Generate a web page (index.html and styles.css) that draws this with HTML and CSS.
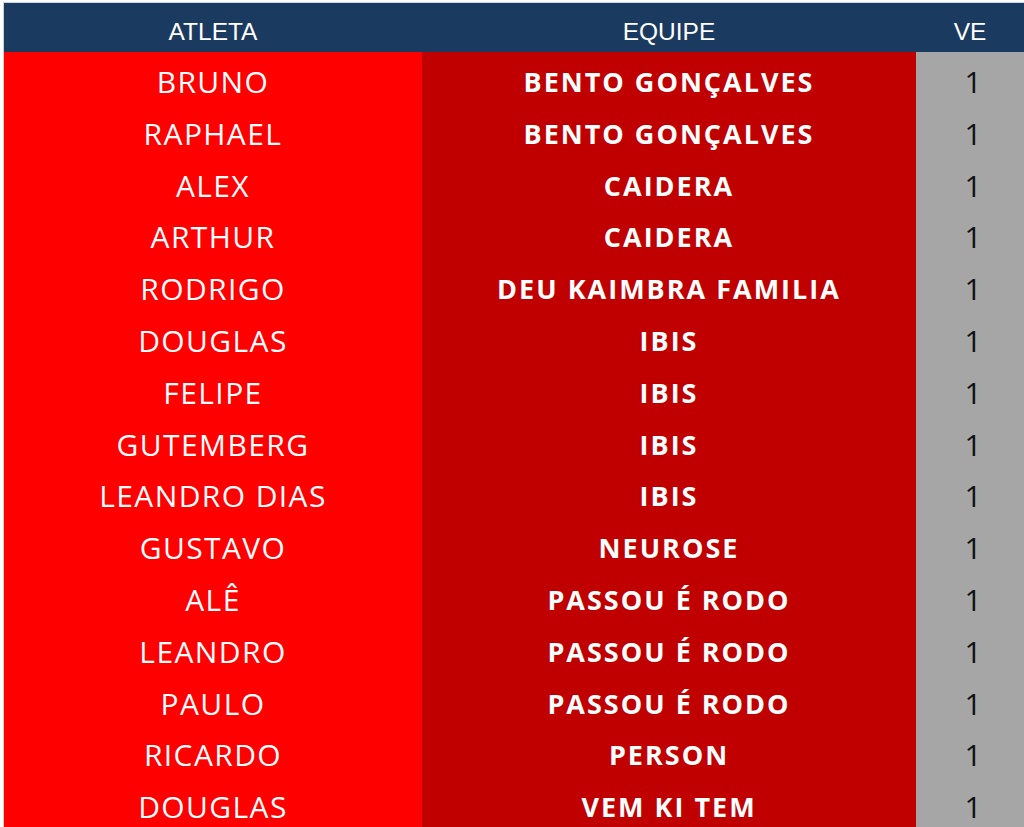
FILE: index.html
```html
<!DOCTYPE html>
<html lang="pt">
<head>
<meta charset="utf-8">
<title>Atletas</title>
<link rel="stylesheet" href="styles.css">
</head>
<body>
<div class="table">
  <div class="th">ATLETA</div>
  <div class="th">EQUIPE</div>
  <div class="th">VE</div>

  <div class="name">BRUNO</div><div class="team">BENTO GONÇALVES</div><div class="ve">1</div>
  <div class="name">RAPHAEL</div><div class="team">BENTO GONÇALVES</div><div class="ve">1</div>
  <div class="name">ALEX</div><div class="team">CAIDERA</div><div class="ve">1</div>
  <div class="name">ARTHUR</div><div class="team">CAIDERA</div><div class="ve">1</div>
  <div class="name">RODRIGO</div><div class="team">DEU KAIMBRA FAMILIA</div><div class="ve">1</div>
  <div class="name">DOUGLAS</div><div class="team">IBIS</div><div class="ve">1</div>
  <div class="name">FELIPE</div><div class="team">IBIS</div><div class="ve">1</div>
  <div class="name">GUTEMBERG</div><div class="team">IBIS</div><div class="ve">1</div>
  <div class="name">LEANDRO DIAS</div><div class="team">IBIS</div><div class="ve">1</div>
  <div class="name">GUSTAVO</div><div class="team">NEUROSE</div><div class="ve">1</div>
  <div class="name">ALÊ</div><div class="team">PASSOU É RODO</div><div class="ve">1</div>
  <div class="name">LEANDRO</div><div class="team">PASSOU É RODO</div><div class="ve">1</div>
  <div class="name">PAULO</div><div class="team">PASSOU É RODO</div><div class="ve">1</div>
  <div class="name">RICARDO</div><div class="team">PERSON</div><div class="ve">1</div>
  <div class="name">DOUGLAS</div><div class="team">VEM KI TEM</div><div class="ve">1</div>
</div>
</body>
</html>
```

FILE: styles.css
```css
html, body {
  margin: 0;
  padding: 0;
  background: #ffffff;
  overflow: hidden;
}
body {
  padding: 3px 0 0 4px;
}
.table {
  display: grid;
  grid-template-columns: 418px 494px 108px;
  grid-template-rows: 49px;
  grid-auto-rows: 51.8px;
  border-top: 1px solid #c9d6e6;
  border-left: 1px solid #d0d0d0;
  margin-top: -1px;
  margin-left: -1px;
}
.th {
  background: #1b3a5f;
  color: #ffffff;
  font-family: "Liberation Sans", Arial, sans-serif;
  font-size: 24.5px;
  text-align: center;
  line-height: 49px;
  padding-top: 4px;
  box-sizing: border-box;
}
.name, .team, .ve {
  text-align: center;
  box-sizing: border-box;
  padding-top: 9px;
  line-height: 42.8px;
  white-space: nowrap;
}
.name {
  background: #ff0000;
  color: #ffffff;
  font-family: "Open Sans", sans-serif;
  font-size: 30px;
  letter-spacing: 1.4px;
}
.team {
  background: #c00000;
  color: #ffffff;
  font-family: "Open Sans", sans-serif;
  font-weight: 700;
  font-size: 27px;
  letter-spacing: 2px;
}
.ve {
  background: #a6a6a6;
  color: #111111;
  font-family: "Open Sans", sans-serif;
  font-size: 30px;
  padding-left: 6px;
}
```
